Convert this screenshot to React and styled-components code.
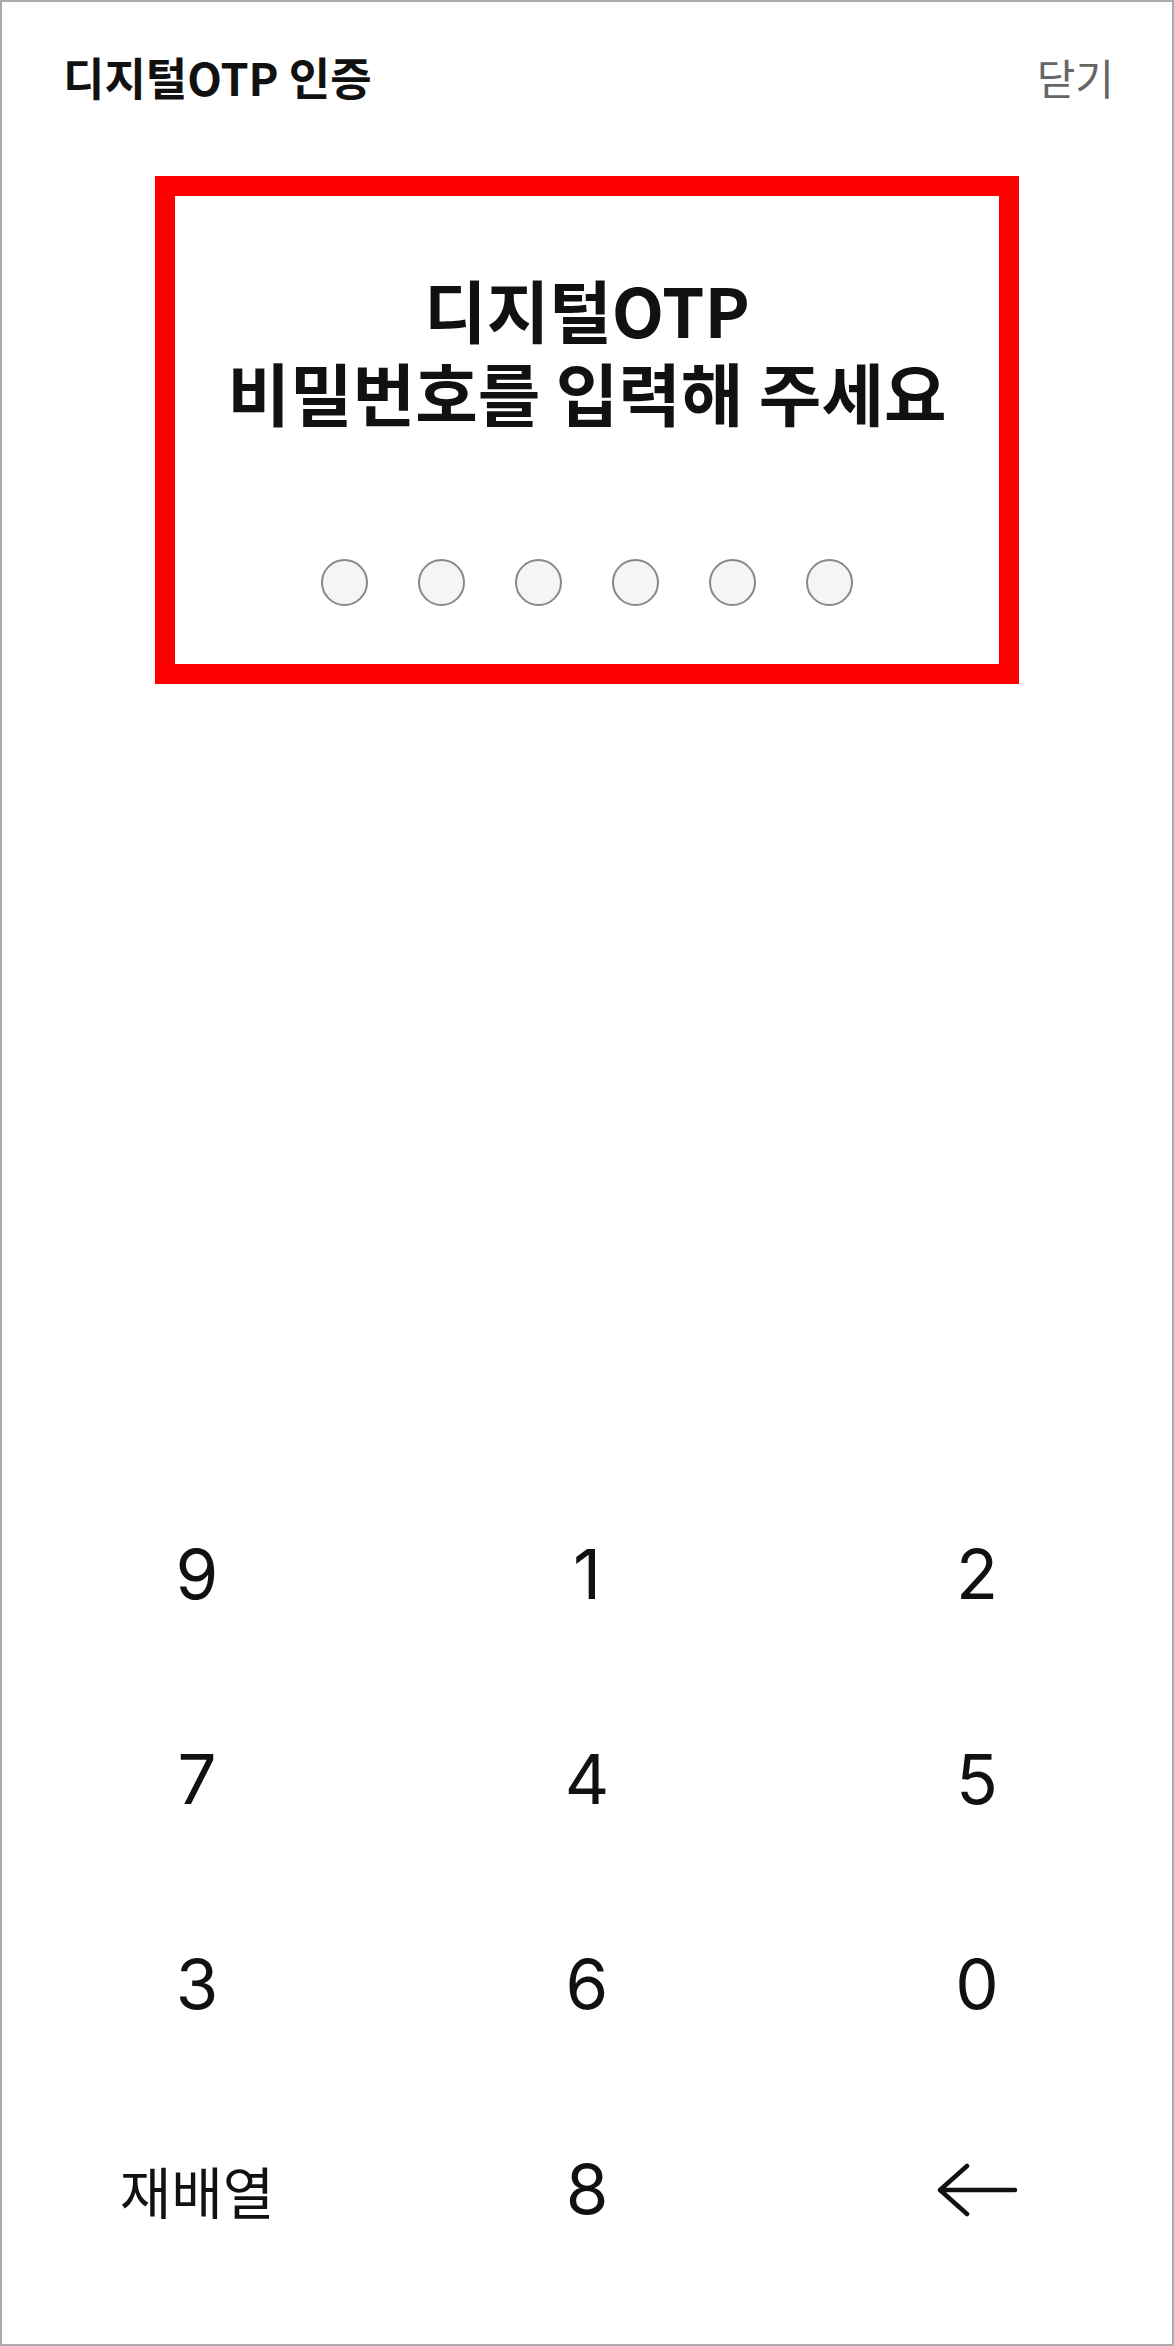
import React from 'react'
import styled, { createGlobalStyle } from 'styled-components'

const GlobalStyle = createGlobalStyle`
  html, body {
    margin: 0;
    padding: 0;
    background: #ffffff;
  }
  body {
    font-family: "Noto Sans CJK KR", "Noto Sans", sans-serif;
    color: #111111;
  }
`

const Screen = styled.div`
  width: 1174px;
  height: 2346px;
  box-sizing: border-box;
  border: 2px solid #ababab;
  background: #ffffff;
  display: flex;
  flex-direction: column;
`

const Header = styled.header`
  display: flex;
  align-items: center;
  justify-content: space-between;
  padding: 48px 58px 0 61px;
`

const Title = styled.h1`
  margin: 0;
  font-size: 45px;
  line-height: 53px;
  font-weight: 700;
  color: #111111;
`

const CloseButton = styled.button`
  border: none;
  background: none;
  padding: 0;
  font-family: inherit;
  font-size: 42px;
  line-height: 53px;
  font-weight: 400;
  color: #666666;
`

const Highlight = styled.section`
  margin: 73px auto 0;
  width: 864px;
  height: 508px;
  box-sizing: border-box;
  border: 20px solid #ff0000;
  display: flex;
  flex-direction: column;
  align-items: center;
  padding: 71px 0 58px;
`

const Heading = styled.h2`
  margin: 0;
  font-size: 68px;
  line-height: 83px;
  font-weight: 700;
  text-align: center;
  color: #111111;
`

const Dots = styled.div`
  margin-top: auto;
  display: flex;
  gap: 50px;
`

const Dot = styled.span`
  width: 47px;
  height: 47px;
  box-sizing: border-box;
  border-radius: 50%;
  border: 2.5px solid ${({ filled }) => (filled ? '#111111' : '#888888')};
  background: ${({ filled }) => (filled ? '#111111' : '#f4f5f7')};
`

const Keypad = styled.div`
  margin-top: auto;
  padding-bottom: 52px;
  display: grid;
  grid-template-columns: repeat(3, 1fr);
  grid-auto-rows: 205px;
`

const Key = styled.button`
  border: none;
  background: none;
  padding: 0;
  display: flex;
  align-items: center;
  justify-content: center;
  color: #111111;
  font-family: ${({ label }) => (label ? '"Noto Sans CJK KR", sans-serif' : 'Inter, "Noto Sans", sans-serif')};
  font-size: ${({ label }) => (label ? '56px' : '69px')};
  font-weight: 400;
  line-height: 1;
`

const BackIcon = () => (
  <svg width="84" height="54" viewBox="0 0 84 54" fill="none">
    <path
      d="M32 3 L5 27 L32 51 M5 27 H80"
      stroke="#111111"
      strokeWidth="4.5"
      strokeLinecap="round"
      strokeLinejoin="round"
    />
  </svg>
)

const keys = ['9', '1', '2', '7', '4', '5', '3', '6', '0']

export default function App () {
  return (
    <>
      <GlobalStyle />
      <Screen>
        <Header>
          <Title>디지털OTP 인증</Title>
          <CloseButton>닫기</CloseButton>
        </Header>
        <Highlight>
          <Heading>
            디지털OTP
            <br />
            비밀번호를 입력해 주세요
          </Heading>
          <Dots>
            {[0, 1, 2, 3, 4, 5].map(i => <Dot key={i} />)}
          </Dots>
        </Highlight>
        <Keypad>
          {keys.map(k => <Key key={k}>{k}</Key>)}
          <Key label>재배열</Key>
          <Key>8</Key>
          <Key aria-label='지우기'><BackIcon /></Key>
        </Keypad>
      </Screen>
    </>
  )
}
